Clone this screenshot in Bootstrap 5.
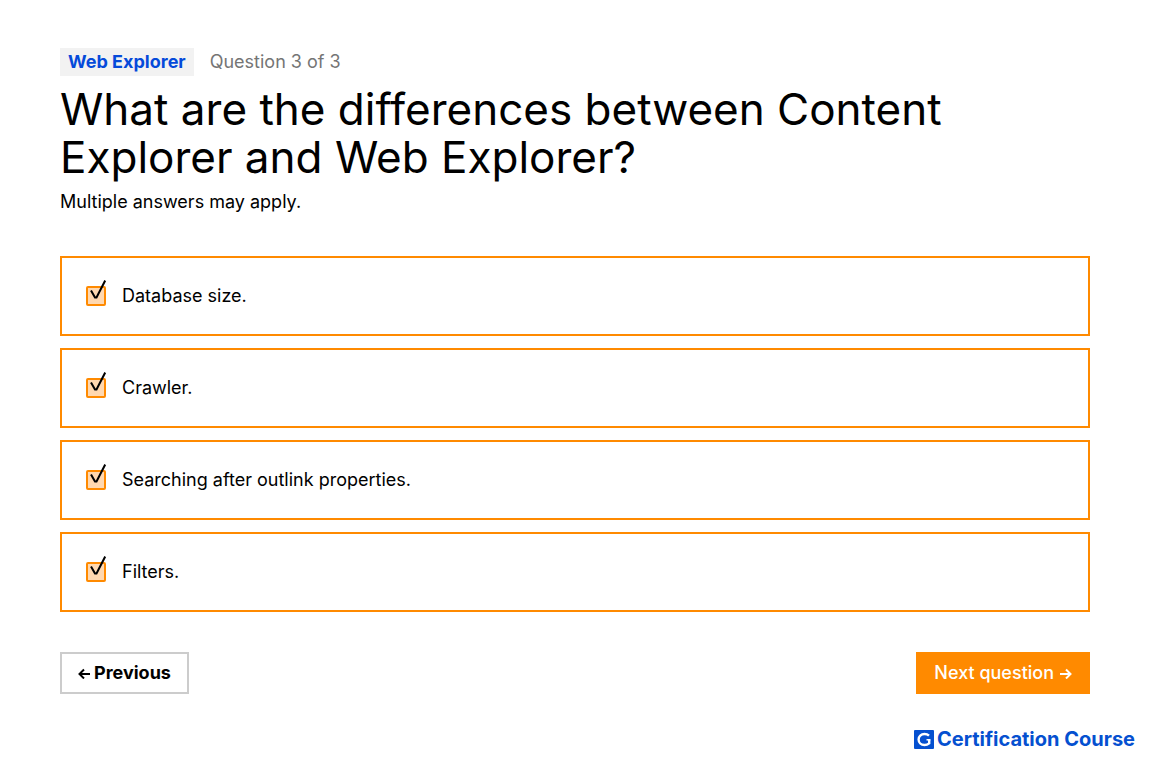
<!DOCTYPE html>
<html lang="en">
<head>
<meta charset="utf-8">
<meta name="viewport" content="width=device-width, initial-scale=1">
<title>Web Explorer quiz</title>
<link href="https://cdn.jsdelivr.net/npm/bootstrap@5.3.0/dist/css/bootstrap.min.css" rel="stylesheet">
<style>
  :root { --quiz-orange: #ff8a00; --quiz-blue: #054ada; }
  body { font: 400 18px/28px Inter, "Liberation Sans", sans-serif; color: #000; background: #fff; }
  .quiz { padding: 48px 60px 0; }
  .topic-tag { background: #f2f2f2; color: var(--quiz-blue); font-weight: 700; padding: 0 8px; }
  .progress-note { color: #757575; }
  .quiz-title { font-size: 44px; line-height: 48px; font-weight: 400; margin: 9px 0 7px; max-width: 940px; }
  .answers { gap: 12px; margin: 40px 0; }
  .answer { border: 2px solid var(--quiz-orange); height: 80px; padding: 0 24px; gap: 16px; cursor: pointer; }
  .tick-input { appearance: none; width: 20px; height: 20px; margin: 0; border: 2px solid var(--quiz-orange); border-radius: 2px; display: block; }
  .tick-input:checked { background: #ffd8b0; }
  .tick-mark { position: absolute; left: 0; bottom: 0; pointer-events: none; visibility: hidden; }
  .tick-input:checked + .tick-mark { visibility: visible; }
  .quiz-btn { height: 42px; padding: 0 16px; border: 2px solid; border-radius: 0; font-size: 18px; line-height: 28px; gap: 4px; }
  .quiz-btn-prev, .quiz-btn-prev:hover { border-color: #ccc; background: #fff; color: #000; font-weight: 700; }
  .quiz-btn-next, .quiz-btn-next:hover { border-color: var(--quiz-orange); background: var(--quiz-orange); color: #fff; font-weight: 500; }
  .brand-line { color: #0550d0; font-weight: 700; font-size: 20px; gap: 3px; padding: 31px 15px 0; }
</style>
</head>
<body>
<main class="quiz">
  <div class="d-flex align-items-center gap-3">
    <span class="topic-tag">Web Explorer</span>
    <span class="progress-note">Question 3 of 3</span>
  </div>
  <h1 class="quiz-title">What are the differences between Content Explorer and Web Explorer?</h1>
  <p class="mb-0">Multiple answers may apply.</p>
  <form>
    <div class="answers d-flex flex-column">
      <label class="answer d-flex align-items-center" for="a1">
        <span class="position-relative"><input class="tick-input" type="checkbox" id="a1" checked><svg class="tick-mark" width="20" height="26" viewBox="0 0 20 26" fill="none" stroke="#000" stroke-width="2" aria-hidden="true"><path d="M5 10.500 9 17.500H10.500L19.200 .5"/></svg></span>
        <span>Database size.</span>
      </label>
      <label class="answer d-flex align-items-center" for="a2">
        <span class="position-relative"><input class="tick-input" type="checkbox" id="a2" checked><svg class="tick-mark" width="20" height="26" viewBox="0 0 20 26" fill="none" stroke="#000" stroke-width="2" aria-hidden="true"><path d="M5 10.500 9 17.500H10.500L19.200 .5"/></svg></span>
        <span>Crawler.</span>
      </label>
      <label class="answer d-flex align-items-center" for="a3">
        <span class="position-relative"><input class="tick-input" type="checkbox" id="a3" checked><svg class="tick-mark" width="20" height="26" viewBox="0 0 20 26" fill="none" stroke="#000" stroke-width="2" aria-hidden="true"><path d="M5 10.500 9 17.500H10.500L19.200 .5"/></svg></span>
        <span>Searching after outlink properties.</span>
      </label>
      <label class="answer d-flex align-items-center" for="a4">
        <span class="position-relative"><input class="tick-input" type="checkbox" id="a4" checked><svg class="tick-mark" width="20" height="26" viewBox="0 0 20 26" fill="none" stroke="#000" stroke-width="2" aria-hidden="true"><path d="M5 10.500 9 17.500H10.500L19.200 .5"/></svg></span>
        <span>Filters.</span>
      </label>
    </div>
    <div class="d-flex justify-content-between">
      <button type="button" class="btn quiz-btn quiz-btn-prev d-flex align-items-center">
        <svg width="12" height="12" viewBox="0 0 12 12" fill="none" stroke="currentColor" stroke-width="2" aria-hidden="true"><path d="M12 7H2M6 2.500 1.500 7 6 11.500"/></svg>
        Previous
      </button>
      <button type="button" class="btn quiz-btn quiz-btn-next d-flex align-items-center">
        Next question
        <svg width="14" height="12" viewBox="0 0 14 12" fill="none" stroke="currentColor" stroke-width="2" aria-hidden="true"><path d="M2 7H12M8 2.500l4.500 4.500L8 11.500"/></svg>
      </button>
    </div>
  </form>
</main>
<footer class="brand-line d-flex justify-content-end align-items-center">
  <svg width="20" height="19" viewBox="0 0 20 19" aria-hidden="true"><rect width="20" height="19" rx="1" fill="#0550d0"/><path d="M15 5.600C13.800 4.500 12.300 4 10.500 4 7 4 4.600 6.400 4.600 9.500s2.400 5.500 5.900 5.500c1.700 0 3.400-.6 4.700-1.600V9.500" fill="none" stroke="#fff" stroke-width="2.400"/><path d="M12.500 9.800h3.900" stroke="#fff" stroke-width="1.500"/></svg>
  <span>Certification Course</span>
</footer>
<script src="https://cdn.jsdelivr.net/npm/bootstrap@5.3.0/dist/js/bootstrap.bundle.min.js"></script>
</body>
</html>
